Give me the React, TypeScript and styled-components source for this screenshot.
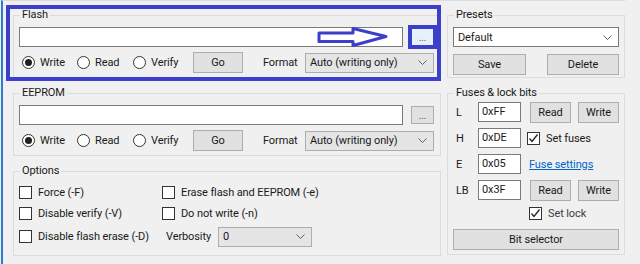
import React from 'react';
import styled, { createGlobalStyle } from 'styled-components';

const GlobalStyle = createGlobalStyle`
  html, body {
    margin: 0;
    padding: 0;
    background: #f0f0f0;
  }
  body {
    font-family: Roboto, 'Liberation Sans', Arial, sans-serif;
    font-size: 11px;
    letter-spacing: -0.1px;
    color: #000;
  }
  * { box-sizing: border-box; }
`;

const MARK = '#3b3fc9';

const Window = styled.div`
  margin-left: 1px;
  border-left: 2px solid #2b7bd3;
  border-top: 1px solid #dcdcdc;
  height: 264px;
  width: 624px;
  display: grid;
  grid-template-columns: 428px 178px;
  column-gap: 6px;
  align-items: start;
  padding: 7px 0 0 10px;
`;

const Column = styled.div`
  position: relative;
  display: flex;
  flex-direction: column;
  gap: 8px;
`;

const Group = styled.fieldset<{ $pad?: string }>`
  margin: 0;
  min-width: 0;
  border: 1px solid #dcdcdc;
  padding: ${({ $pad }) => $pad || '5px 6px 4px 5px'};
`;

const Legend = styled.legend`
  margin-left: 1px;
  padding: 0 2px;
  line-height: 14px;
  color: #1a1a1a;
`;

const PathRow = styled.div`
  position: relative;
  display: flex;
  align-items: center;
  gap: 8px;
`;

const TextBox = styled.div<{ $w?: number }>`
  height: 20px;
  background: #fff;
  border: 1px solid #7a7a7a;
  padding: 0 3px;
  line-height: 18px;
  color: #1a1a1a;
  ${({ $w }) => ($w ? `width: ${$w}px;` : 'flex: 1;')}
`;

const BrowseButton = styled.div<{ $mark?: boolean }>`
  width: 23px;
  height: 18px;
  border: 1px solid ${({ $mark }) => ($mark ? '#0078d7' : '#adadad')};
  background: ${({ $mark }) => ($mark ? '#e5f1fb' : '#e1e1e1')};
  color: #555;
  font-size: 10px;
  text-align: center;
  line-height: 18px;
  outline: ${({ $mark }) => ($mark ? `4px solid ${MARK}` : 'none')};
  outline-offset: -1px;
`;

const ActionRow = styled.div`
  margin-top: 5px;
  display: grid;
  grid-template-columns: 55px 56px 60px 50px 1fr 129px;
  align-items: center;
  height: 21px;
  padding-left: 3px;
`;

const RadioItem = styled.label`
  display: flex;
  align-items: center;
  gap: 5px;
  color: #1a1a1a;
`;

const RadioDot = styled.span<{ $on?: boolean }>`
  width: 13px;
  height: 13px;
  border-radius: 50%;
  border: 1px solid #333;
  background: #fff;
  display: flex;
  align-items: center;
  justify-content: center;
  &::after {
    content: '';
    width: 7px;
    height: 7px;
    border-radius: 50%;
    background: ${({ $on }) => ($on ? '#1f1f1f' : 'transparent')};
  }
`;

const Button = styled.div<{ $w?: number }>`
  width: ${({ $w }) => ($w ? `${$w}px` : '100%')};
  height: 21px;
  background: #e1e1e1;
  border: 1px solid #adadad;
  text-align: center;
  line-height: 19px;
  color: #1a1a1a;
`;

const FieldLabel = styled.span`
  padding-left: 20px;
  color: #1a1a1a;
`;

const SelectBox = styled.div<{ $white?: boolean; $w?: number }>`
  width: ${({ $w }) => ($w ? `${$w}px` : '100%')};
  height: 20px;
  display: flex;
  align-items: center;
  justify-content: space-between;
  padding: 0 6px 0 4px;
  background: ${({ $white }) => ($white ? '#fff' : '#e5e5e5')};
  border: 1px solid ${({ $white }) => ($white ? '#7a7a7a' : '#adadad')};
  color: #1a1a1a;
`;

const Chevron = () => (
  <svg width="9" height="5" viewBox="0 0 9 5">
    <polyline points="0.5,0.5 4.5,4.5 8.5,0.5" fill="none" stroke="#606060" strokeWidth="1" />
  </svg>
);

const Select = ({ value, white, w }: { value: string; white?: boolean; w?: number }) => (
  <SelectBox $white={white} $w={w}>
    <span>{value}</span>
    <Chevron />
  </SelectBox>
);

const Highlight = styled.div`
  position: absolute;
  left: -7px;
  top: -3px;
  width: 435px;
  height: 76px;
  border: 4px solid ${MARK};
  pointer-events: none;
`;

const ArrowMark = styled.svg`
  position: absolute;
  left: 297px;
  top: 0;
`;

const OptionsGrid = styled.div`
  display: grid;
  grid-template-columns: 143px 1fr;
  grid-template-rows: 21px 21px 25px;
  align-items: center;
`;

const CheckItem = styled.label<{ $dim?: boolean }>`
  display: flex;
  align-items: center;
  gap: 6px;
  color: ${({ $dim }) => ($dim ? '#3c3c3c' : '#1a1a1a')};
`;

const CheckBoxBox = styled.span`
  width: 13px;
  height: 13px;
  border: 1px solid #333;
  background: #fff;
  display: flex;
  align-items: center;
  justify-content: center;
`;

const Check = ({ label, on, dim }: { label: string; on?: boolean; dim?: boolean }) => (
  <CheckItem $dim={dim}>
    <CheckBoxBox>
      {on && (
        <svg width="11" height="11" viewBox="0 0 11 11">
          <polyline points="1.5,5.5 4,8.5 9.5,1.5" fill="none" stroke="#222" strokeWidth="1.3" />
        </svg>
      )}
    </CheckBoxBox>
    {label}
  </CheckItem>
);

const VerbosityCell = styled.div`
  display: flex;
  align-items: center;
  padding-left: 4px;
`;

const VerbosityLabel = styled.span`
  width: 52px;
  color: #1a1a1a;
`;

const PresetButtons = styled.div`
  margin-top: 7px;
  display: flex;
  justify-content: space-between;
`;

const FuseList = styled.div`
  display: flex;
  flex-direction: column;
  gap: 6px;
`;

const FuseRow = styled.div`
  display: flex;
  align-items: center;
  height: 20px;
`;

const FuseName = styled.span`
  width: 25px;
  padding-left: 3px;
  color: #1a1a1a;
`;

const FuseTail = styled.div<{ $gap?: number }>`
  display: flex;
  align-items: center;
  gap: 7px;
  margin-left: ${({ $gap }) => $gap ?? 9}px;
`;

const Link = styled.span`
  color: #0066cc;
  text-decoration: underline;
`;

const LockRow = styled.div`
  margin-top: 7px;
  padding-left: 76px;
  height: 13px;
  display: flex;
  align-items: center;
`;

const BitButtonWrap = styled.div`
  margin-top: 9px;
`;

const MemoryGroup = ({ title, marked }: { title: string; marked?: boolean }) => (
  <Group>
    <Legend>{title}</Legend>
    <PathRow>
      <TextBox />
      <BrowseButton $mark={marked}>...</BrowseButton>
      {marked && (
        <ArrowMark width="74" height="21" viewBox="0 0 74 21">
          <polygon
            points="3,6 37,6 37,1.5 70,9.5 37,18.5 37,14.5 3,14.5"
            fill="#fff"
            stroke={MARK}
            strokeWidth="3"
            strokeLinejoin="round"
          />
        </ArrowMark>
      )}
    </PathRow>
    <ActionRow>
      <RadioItem>
        <RadioDot $on />
        Write
      </RadioItem>
      <RadioItem>
        <RadioDot />
        Read
      </RadioItem>
      <RadioItem>
        <RadioDot />
        Verify
      </RadioItem>
      <Button $w={50}>Go</Button>
      <FieldLabel>Format</FieldLabel>
      <Select value="Auto (writing only)" />
    </ActionRow>
  </Group>
);

const fuses = [
  { name: 'L', value: '0xFF' },
  { name: 'H', value: '0xDE' },
  { name: 'E', value: '0x05' },
  { name: 'LB', value: '0x3F' },
];

export default function App() {
  return (
    <>
      <GlobalStyle />
      <Window>
        <Column>
          <MemoryGroup title="Flash" marked />
          <MemoryGroup title="EEPROM" />
          <Group $pad="4px 6px 6px 5px">
            <Legend>Options</Legend>
            <OptionsGrid>
              <Check label="Force (-F)" />
              <Check label="Erase flash and EEPROM (-e)" />
              <Check label="Disable verify (-V)" />
              <Check label="Do not write (-n)" />
              <Check label="Disable flash erase (-D)" />
              <VerbosityCell>
                <VerbosityLabel>Verbosity</VerbosityLabel>
                <Select value="0" w={94} />
              </VerbosityCell>
            </OptionsGrid>
          </Group>
          <Highlight />
        </Column>

        <Column>
          <Group $pad="5px 5px 2px 5px">
            <Legend>Presets</Legend>
            <Select value="Default" white />
            <PresetButtons>
              <Button $w={73}>Save</Button>
              <Button $w={72}>Delete</Button>
            </PresetButtons>
          </Group>
          <Group $pad="2px 5px 4px 5px">
            <Legend>Fuses &amp; lock bits</Legend>
            <FuseList>
              {fuses.map((f) => (
                <FuseRow key={f.name}>
                  <FuseName>{f.name}</FuseName>
                  <TextBox $w={43}>{f.value}</TextBox>
                  {(f.name === 'L' || f.name === 'LB') && (
                    <FuseTail>
                      <Button $w={41}>Read</Button>
                      <Button $w={41}>Write</Button>
                    </FuseTail>
                  )}
                  {f.name === 'H' && (
                    <FuseTail $gap={6}>
                      <Check label="Set fuses" on />
                    </FuseTail>
                  )}
                  {f.name === 'E' && (
                    <FuseTail $gap={8}>
                      <Link>Fuse settings</Link>
                    </FuseTail>
                  )}
                </FuseRow>
              ))}
            </FuseList>
            <LockRow>
              <Check label="Set lock" on dim />
            </LockRow>
            <BitButtonWrap>
              <Button>Bit selector</Button>
            </BitButtonWrap>
          </Group>
        </Column>
      </Window>
    </>
  );
}
